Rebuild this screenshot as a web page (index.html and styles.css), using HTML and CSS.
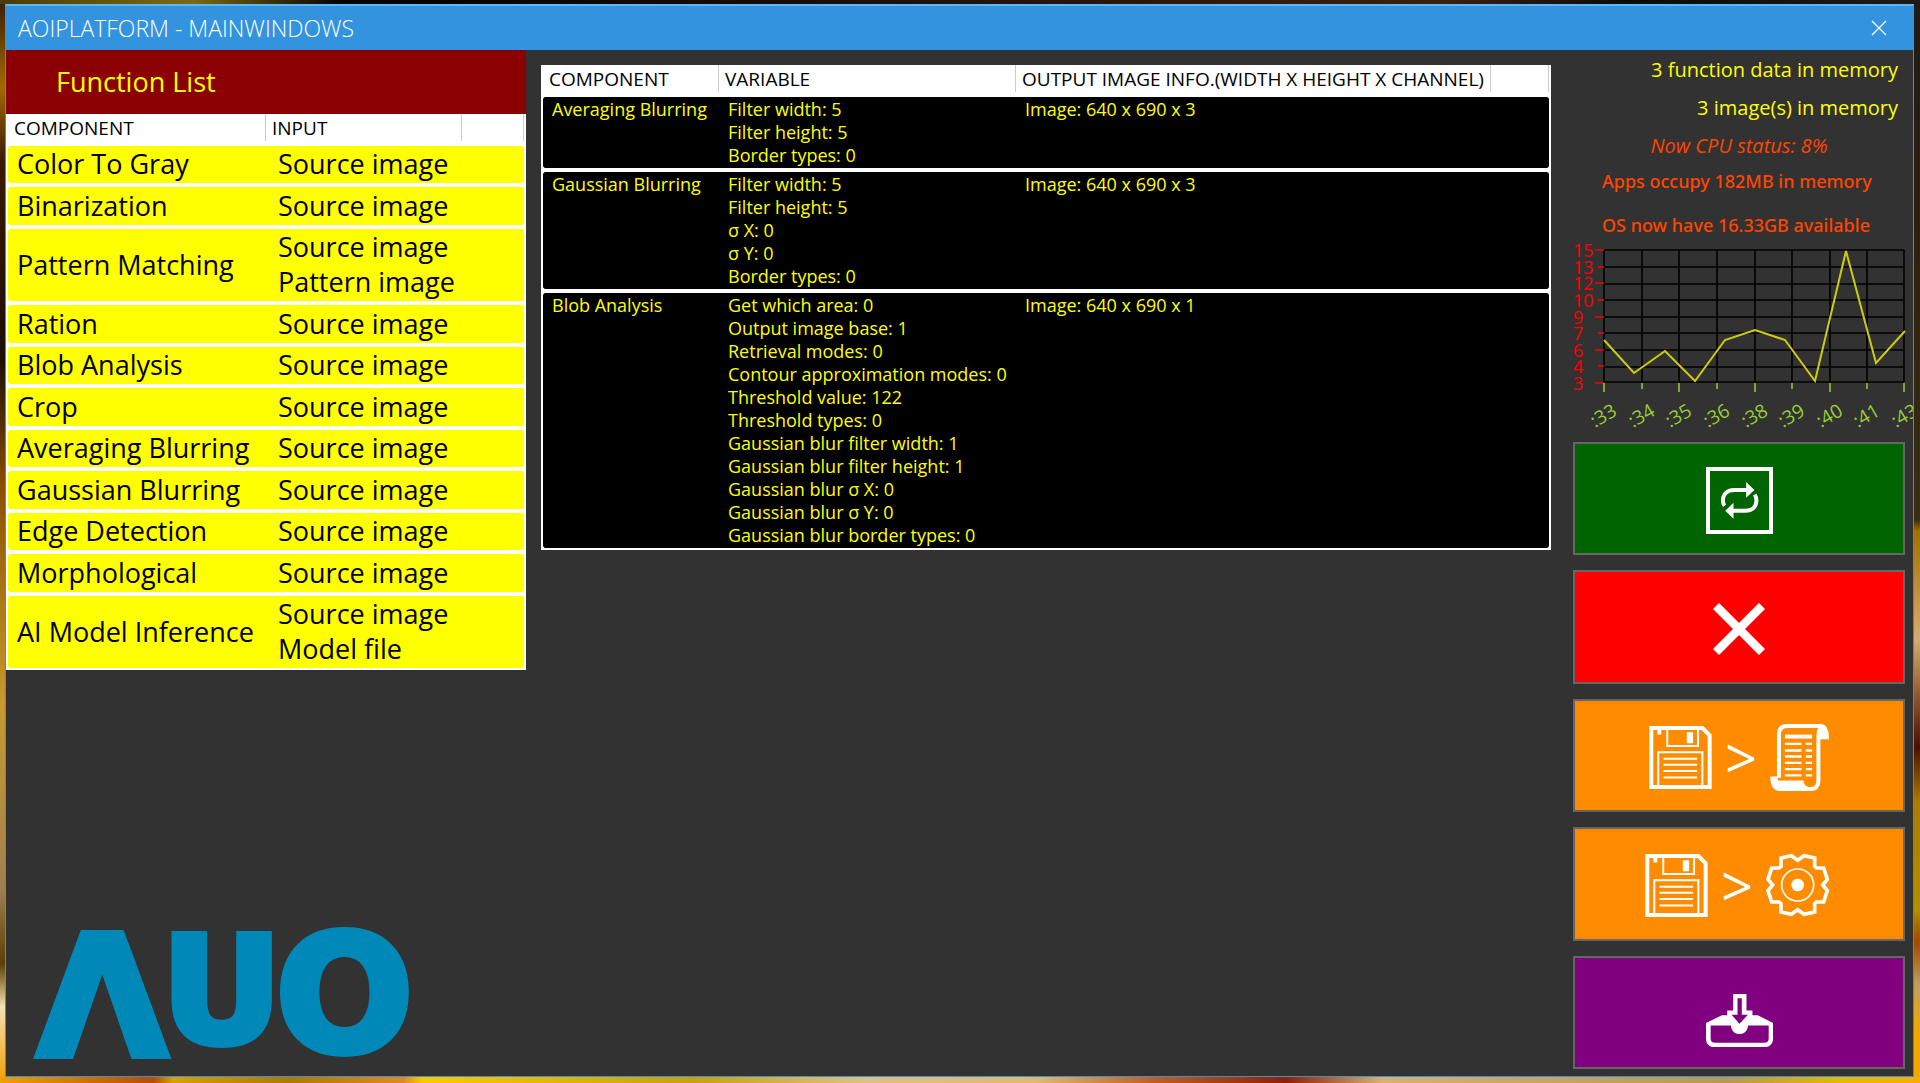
FILE: index.html
```html
<!DOCTYPE html>
<html lang="en">
<head>
  <meta charset="UTF-8">
  <meta name="viewport" content="width=device-width, initial-scale=1.0">
  <title>AOIPlatform - MainWindows</title>
  <link rel="stylesheet" href="styles.css">
</head>
<body>
  <div class="window">
    <header class="titlebar">
      <h1>AOIPLATFORM - MAINWINDOWS</h1>
      <button class="close" aria-label="Close">
        <svg width="16" height="16" viewBox="0 0 16 16"><path d="M1 1L15 15M15 1L1 15" stroke="#fff" stroke-width="1.3"/></svg>
      </button>
    </header>

    <main class="content">
      <section class="functions">
        <h2>Function List</h2>
        <table class="list function-list">
          <colgroup><col class="f-component"><col class="f-input"><col></colgroup>
          <thead>
            <tr><th>COMPONENT</th><th>INPUT</th><th></th></tr>
          </thead>
          <tbody>
            <tr><td>Color To Gray</td><td>Source image</td><td></td></tr>
            <tr><td>Binarization</td><td>Source image</td><td></td></tr>
            <tr><td>Pattern Matching</td><td>Source image<br>Pattern image</td><td></td></tr>
            <tr><td>Ration</td><td>Source image</td><td></td></tr>
            <tr><td>Blob Analysis</td><td>Source image</td><td></td></tr>
            <tr><td>Crop</td><td>Source image</td><td></td></tr>
            <tr><td>Averaging Blurring</td><td>Source image</td><td></td></tr>
            <tr><td>Gaussian Blurring</td><td>Source image</td><td></td></tr>
            <tr><td>Edge Detection</td><td>Source image</td><td></td></tr>
            <tr><td>Morphological</td><td>Source image</td><td></td></tr>
            <tr><td>AI Model Inference</td><td>Source image<br>Model file</td><td></td></tr>
          </tbody>
        </table>
        <svg class="logo" width="400" height="190" viewBox="0 -40 400 190" role="img" aria-label="AUO">
          <text y="139"><tspan x="12" font-size="166">Λ</tspan><tspan x="136" y="126" font-size="147">U</tspan><tspan x="250" y="135" font-size="161">O</tspan></text>
        </svg>
      </section>

      <section class="steps">
        <table class="list step-list">
          <colgroup><col class="s-component"><col class="s-variable"><col class="s-output"><col></colgroup>
          <thead>
            <tr><th>COMPONENT</th><th>VARIABLE</th><th>OUTPUT IMAGE INFO.(WIDTH X HEIGHT X CHANNEL)</th><th></th></tr>
          </thead>
          <tbody>
            <tr>
              <td>Averaging Blurring</td>
              <td>Filter width: 5<br>Filter height: 5<br>Border types: 0</td>
              <td>Image: 640 x 690 x 3</td>
              <td></td>
            </tr>
            <tr>
              <td>Gaussian Blurring</td>
              <td>Filter width: 5<br>Filter height: 5<br>σ X: 0<br>σ Y: 0<br>Border types: 0</td>
              <td>Image: 640 x 690 x 3</td>
              <td></td>
            </tr>
            <tr>
              <td>Blob Analysis</td>
              <td>Get which area: 0<br>Output image base: 1<br>Retrieval modes: 0<br>Contour approximation modes: 0<br>Threshold value: 122<br>Threshold types: 0<br>Gaussian blur filter width: 1<br>Gaussian blur filter height: 1<br>Gaussian blur σ X: 0<br>Gaussian blur σ Y: 0<br>Gaussian blur border types: 0</td>
              <td>Image: 640 x 690 x 1</td>
              <td></td>
            </tr>
          </tbody>
        </table>
      </section>

      <aside class="side">
        <p class="count">3 function data in memory</p>
        <p class="count">3 image(s) in memory</p>
        <p class="cpu">Now CPU status: 8%</p>
        <p class="mem">Apps occupy 182MB in memory</p>
        <p class="mem os">OS now have 16.33GB available</p>

        <!-- cpu history -->
        <svg class="chart" width="332" height="201" viewBox="0 1 332 201">
          <path class="grid" d="M31 10V142M69 10V142M106 10V142M144 10V142M182 10V142M219 10V142M257 10V142M294 10V142M331 10V142M31 10H331M31 27H331M31 44H331M31 60H331M31 77H331M31 93H331M31 110H331M31 127H331M31 142H331"/>
          <path class="y-ticks" d="M22 10H31M25 27H31M22 43H31M25 60H31M22 77H31M25 93H31M22 110H31M25 126H31M22 143H31"/>
          <path class="x-ticks" d="M31 143V152M69 143V149M106 143V152M144 143V149M182 143V152M219 143V149M257 143V152M294 143V149M331 143V152"/>
          <polyline class="line" points="31,100 61,133 92,111 122,141 152,100 182,90 212,100 242,141 273,11 303,123 332,91"/>
          <g class="y-labels">
            <text x="0" y="17">15</text>
            <text x="0" y="34">13</text>
            <text x="0" y="50">12</text>
            <text x="0" y="67">10</text>
            <text x="0" y="84">9</text>
            <text x="0" y="100">7</text>
            <text x="0" y="117">6</text>
            <text x="0" y="133">4</text>
            <text x="0" y="150">3</text>
          </g>
          <g class="x-labels">
            <text transform="translate(22 188) rotate(-30)">:33</text>
            <text transform="translate(60 188) rotate(-30)">:34</text>
            <text transform="translate(97 188) rotate(-30)">:35</text>
            <text transform="translate(135 188) rotate(-30)">:36</text>
            <text transform="translate(173 188) rotate(-30)">:38</text>
            <text transform="translate(210 188) rotate(-30)">:39</text>
            <text transform="translate(248 188) rotate(-30)">:40</text>
            <text transform="translate(285 188) rotate(-30)">:41</text>
            <text transform="translate(323 188) rotate(-30)">:43</text>
          </g>
        </svg>

        <div class="actions">
          <button class="green" aria-label="Run">
            <svg width="67" height="67" viewBox="0 0 202 202">
              <rect class="o" x="6" y="6" width="190" height="190" stroke-width="12"/>
              <path class="o" stroke-width="12" d="M124 69H85C60 69 51 85 51 101C51 107 53 113 56 117M80 132H118C144 132 152 116 152 101C152 94 150 88 147 83"/>
              <path d="M121 45L146 69L121 93ZM83 108V156L58 132Z"/>
            </svg>
          </button>
          <button class="red" aria-label="Clear">
            <svg width="52" height="52" viewBox="0 0 157 157"><path class="o" stroke-width="26" d="M9 9L148 148M148 9L9 148"/></svg>
          </button>
          <button class="orange" aria-label="Save to script">
            <svg width="63" height="63" viewBox="0 0 188 190">
              <path class="o" stroke-width="12" d="M6 6H160L182 28V184H6Z"/>
              <path class="o" stroke-width="6" d="M54 6V60H147V6M27 184V79H160V184M43 99H144M43 117H144M43 136H144M43 155H144"/>
              <path d="M24 10H36V26H24ZM113 19H132V52H113Z"/>
            </svg>
            <span>&gt;</span>
            <svg width="59" height="67" viewBox="0 0 176 202">
              <path class="o" stroke-width="12" d="M26 162V32C26 14 36 6 50 6H152M145 170V36C145 20 149 12 156 8"/>
              <path d="M150 0C168 0 177 14 177 46H145V30C145 16 148 10 150 0Z"/>
              <path d="M0 158H22V170H100C102 185 111 190 120 190C134 190 139 182 139 168H151C151 190 140 202 124 202H30C10 202 0 186 0 158Z"/>
              <path class="o" stroke-width="12" d="M44 38H126"/>
              <path class="o" stroke-width="7" d="M44 60H94M107 60H126M44 80H94M107 80H126M44 98H94M107 98H126M44 117H94M107 117H126M44 136H94M107 136H126M44 155H94M107 155H126"/>
            </svg>
          </button>
          <button class="orange" aria-label="Save settings">
            <svg width="63" height="63" viewBox="0 0 188 190">
              <path class="o" stroke-width="12" d="M6 6H160L182 28V184H6Z"/>
              <path class="o" stroke-width="6" d="M54 6V60H147V6M27 184V79H160V184M43 99H144M43 117H144M43 136H144M43 155H144"/>
              <path d="M24 10H36V26H24ZM113 19H132V52H113Z"/>
            </svg>
            <span>&gt;</span>
            <svg width="67" height="64" viewBox="0 0 201 190">
              <path class="o" stroke-width="11" d="M45 14L76 7L95 21L114 7L146 14V39L151 44H173L184 78L170 95L184 112L173 146H151L146 151V176L114 183L95 169L76 183L45 176V151L39 146H17L6 112L20 95L6 78L17 44H39L45 39Z"/>
              <circle class="o" cx="95" cy="95" r="48" stroke-width="5"/>
              <circle cx="95" cy="95" r="19"/>
            </svg>
          </button>
          <button class="purple" aria-label="Import">
            <svg width="67" height="67" viewBox="0 -42 202 202">
              <path fill-rule="evenodd" d="M82 0H122V50H140V64H156L202 88V135C202 150 192 160 178 160H24C10 160 0 150 0 135V88L48 64H64V50H82ZM14 95H75C77 112 88 121 101 121S125 112 127 95H189V134C189 142 185 147 176 147H27C18 147 14 142 14 134ZM95 13H108V63H126L101 90L77 63H95Z"/>
            </svg>
          </button>
        </div>
      </aside>
    </main>
  </div>
</body>
</html>
```
FILE: styles.css
```css
* {
  box-sizing: border-box;
}
body {
  margin: 0;
  min-height: 100vh;
  padding: 4px 6px 6px 5px;
  display: flex;
  font-family: "Open Sans", "Noto Sans", sans-serif;
  background:
    linear-gradient(90deg, #4a3c00, #7a6a10 10%, #000 18%, #3a2010 75%, #0a0a0a 85%, #1e1c18) top / 100% 4px no-repeat,
    linear-gradient(90deg, #f0a000, #b84c00 8%, #d8a000 9%, #b07800 15%, #e08820 21%, #ffc800 22%, #c8a010 36%, #e0c080 45%, #e0b870 54%, #c06020 60%, #902000 67%, #d8b070 72%, #b89850 90%, #e8b800 96%, #f8ac00) bottom / 100% 6px no-repeat,
    linear-gradient(#3a1c00, #a06a00 8%, #3a1a00 15%, #1c0e00 33%, #8a5000 45%, #c89a30 65%, #a08050 82%, #5a4000 89%, #f5e0b0 93%, #f0a000) left / 5px 100% no-repeat,
    linear-gradient(#1e1c18, #2a2010 20%, #3a2e14 48%, #a07000 49%, #d8aa70 59%, #4a1000 69%, #a87c00 74%, #b09000 84%, #a04800 87%, #c0a060 91%, #f0a800 95%) right / 6px 100% no-repeat;
}
.window {
  flex: 1;
  display: flex;
  flex-direction: column;
  background: #323232;
  border: 1px solid #3393df;
  border-top: 2px solid #5fb6f6;
  overflow: hidden;
}
.titlebar {
  display: flex;
  align-items: center;
  justify-content: space-between;
  height: 44px;
  padding: 0 26px 0 12px;
  background: #3393df;
}
.titlebar h1 {
  margin: 0;
  font-size: 23px;
  font-weight: 300;
  color: #fff;
}
.close {
  display: flex;
  padding: 0;
  border: none;
  background: none;
}

.content {
  flex: 1;
  display: grid;
  grid-template-columns: 520px 1fr 332px;
  padding-right: 8px;
}
.functions {
  display: flex;
  flex-direction: column;
}
.functions h2 {
  margin: 0;
  padding-left: 50px;
  background: #8b0000;
  color: #ff0;
  font-size: 27px;
  font-weight: 400;
  line-height: 64px;
}
.logo {
  margin: auto 0 10px 20px;
  overflow: visible;
  font-family: "DejaVu Sans", sans-serif;
  font-weight: 700;
  fill: #0089b8;
  stroke: #0089b8;
  stroke-width: 8;
}

/* list views */
.list {
  width: 100%;
  table-layout: fixed;
  border-spacing: 0;
  background: #fff;
}
.list th {
  height: 30px;
  padding: 0 0 2px 6px;
  font-size: 19px;
  font-weight: 400;
  line-height: 24px;
  text-align: left;
  white-space: nowrap;
  color: #000;
  background: linear-gradient(#ccc, #ccc) right top / 1px 27px no-repeat;
}
.list th:first-child {
  padding-left: 8px;
}
.list th:last-child {
  background-position: right 2px top;
}
.list td {
  border: 0 solid #fff;
  border-width: 2px 0;
  background-clip: padding-box;
}
.list td:first-child {
  border-left-width: 2px;
  border-radius: 4px 0 0 4px;
}
.list td:last-child {
  border-right-width: 2px;
  border-radius: 0 4px 4px 0;
}
.f-component { width: 260px; }
.f-input { width: 196px; }
.s-component { width: 178px; }
.s-variable { width: 297px; }
.s-output { width: 475px; }

.function-list td {
  height: 41px;
  padding: 0 0 2px 12px;
  background-color: #ff0;
  color: #000;
  font-size: 27px;
  line-height: 35px;
  white-space: nowrap;
}
.function-list td:first-child {
  padding-left: 9px;
}
.function-list tr:nth-child(even) td {
  height: 42px;
}
.step-list td {
  padding: 1px 0 1px 9px;
  background-color: #000;
  color: #ff0;
  font-size: 18px;
  line-height: 23px;
  vertical-align: top;
  white-space: nowrap;
}
.steps {
  padding: 15px 22px 0 15px;
}

/* right column */
.side {
  display: flex;
  flex-direction: column;
  padding: 1px 0 7px;
}
.side p {
  margin: 0;
}
.side .count {
  padding-right: 7px;
  font-size: 20px;
  font-weight: 500;
  line-height: 38px;
  text-align: right;
  color: #ff0;
}
.cpu {
  font-size: 20px;
  font-style: italic;
  line-height: 38px;
  text-align: center;
  color: #ff4500;
}
.mem {
  padding-left: 29px;
  font-family: "Noto Sans", sans-serif;
  font-size: 18px;
  font-weight: 500;
  line-height: 32px;
  white-space: nowrap;
  color: #ff4500;
}
.side .os {
  margin-top: 12px;
}
.chart {
  overflow: visible;
  fill: none;
}
.grid { stroke: #000; stroke-width: 1.6; }
.y-ticks { stroke: #f00; stroke-width: 1.5; }
.x-ticks { stroke: #9acd32; stroke-width: 1.5; }
.line { stroke: #cdcd10; stroke-width: 2; }
.y-labels { fill: #f00; font-size: 18px; }
.x-labels { fill: #9acd32; font-size: 19px; }

.actions {
  flex: 1;
  display: flex;
  flex-direction: column;
  gap: 15px;
}
.actions button {
  flex: 1;
  display: flex;
  align-items: center;
  justify-content: center;
  gap: 13px;
  padding: 3px 0 0;
  border: 2px solid #666;
  font-family: inherit;
  color: #fff;
}
.actions svg {
  fill: #fff;
}
.actions .o {
  fill: none;
  stroke: #fff;
}
.actions span {
  font-size: 56px;
  line-height: 56px;
}
.green { background: #006400; }
.red { background: #f00; }
.orange { background: #ff8c00; }
.purple { background: #800080; }
```
